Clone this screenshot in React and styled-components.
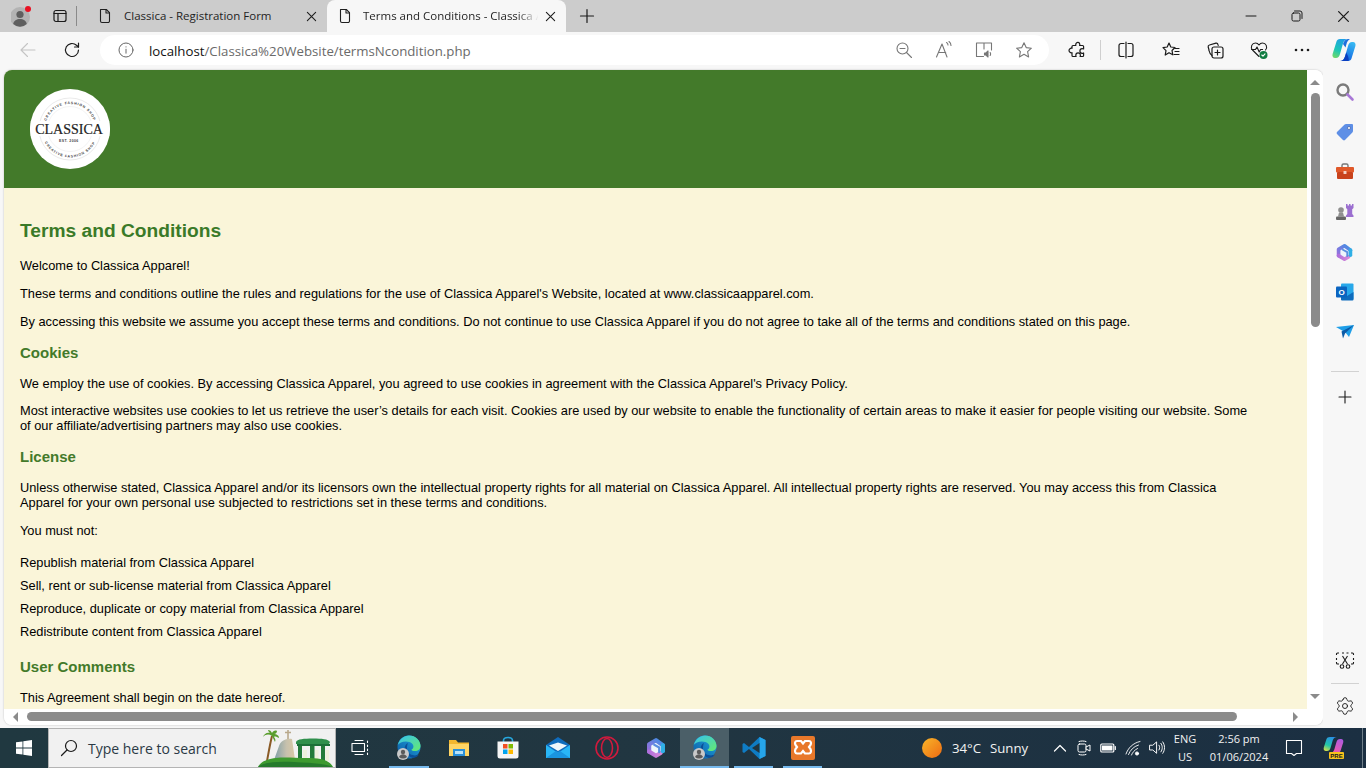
import React from "react";
import styled, { createGlobalStyle } from "styled-components";
import { Settings } from "lucide-react";

const Global = createGlobalStyle`
  html, body { margin: 0; padding: 0; width: 1366px; height: 768px; overflow: hidden; }
  * { box-sizing: border-box; }
`;

const Screen = styled.div`
  width: 1366px; height: 768px; display: flex; flex-direction: column;
  background: #f7f7f7; overflow: hidden; font-family: "Open Sans", "Liberation Sans", sans-serif;
`;
const TabStrip = styled.div`
  height: 32px; flex: none; display: flex; align-items: stretch; background: #cccccc; padding-left: 4px;
`;
const Slot = styled.div`
  width: ${p => p.$w || 40}px; height: ${p => p.$h ? p.$h + "px" : "auto"}; flex: none; margin-left: ${p => p.$ml || 0}px;
  display: flex; align-items: center; justify-content: center; position: relative; color: ${p => p.$c || "#1b1b1b"};
`;
const StripDivider = styled.div`
  width: 1px; height: 20px; background: #8a8a8a; align-self: center; flex: none; margin-right: 11px;
`;
const Tab = styled.div`
  width: 239px; flex: none; display: flex; align-items: center; padding-left: ${p => p.$active ? 10 : 9}px;
  background: ${p => p.$active ? "#f7f7f7" : "transparent"}; border-radius: 8px 8px 0 0; color: #1f1f1f;
`;
const TabIcon = styled.div`width: 16px; height: 16px; flex: none; margin-right: ${p => p.$gap}px; display:flex;`;
const TabTitle = styled.span`
  flex: none; width: 179px; font-size: 11.5px; line-height: 16px; white-space: nowrap; overflow: hidden;
  ${p => p.$fade ? "-webkit-mask-image: linear-gradient(90deg,#000 86%,transparent 98%); mask-image: linear-gradient(90deg,#000 86%,transparent 98%);" : ""}
`;
const TabClose = styled.div`width: 16px; height: 16px; flex: none; display:flex; align-items:center; justify-content:center;`;
const Spacer = styled.div`flex: 1;`;

const Toolbar = styled.div`
  height: 36px; flex: none; display: flex; align-items: center; padding-left: 8px; background: #f7f7f7;
`;
const AddressBar = styled.div`
  width: 949px; height: 30px; flex: none; margin-left: 8px; margin-right: 8px; background: #fff; border-radius: 15px;
  display: flex; align-items: center; padding-left: 16px; padding-right: 5px;
`;
const Url = styled.div`
  margin-left: 13px; padding-top: 2px; flex: 1; font-size: 13.25px; color: #6a6a6a; white-space: nowrap;
  b { font-weight: 400; color: #111; }
`;
const ToolDivider = styled.div`width: 1px; height: 20px; background: #cfcfcf; flex: none; margin: 0 3px;`;

const Middle = styled.div`flex: 1; display: flex; min-height: 0;`;
const Browser = styled.div`
  width: 1319px; margin: 2px 0 3px 4px; flex: none; background: #fff; border-radius: 8px;
  display: grid; grid-template-columns: 1303px 16px; grid-template-rows: 639px 16px; overflow: hidden;
  box-shadow: 0 0 2px rgba(0,0,0,.25);
`;
const Page = styled.div`overflow: hidden; background: #faf5d9; font-family: "Liberation Sans", Arial, sans-serif; color: #000;`;
const Banner = styled.header`
  height: 118px; background: #437a2a; padding: 19px 26px;
`;
const LogoCircle = styled.div`width: 80px; height: 80px; border-radius: 50%; background: #fff; overflow: hidden;`;
const Article = styled.main`
  width: 1251px; padding: 16.1px 0 0 16px; font-size: 12.8px; line-height: 15px;
`;
const Title = styled.h1`
  margin: 16px 0; font-size: 19.2px; line-height: 22px; font-weight: 700; color: #3a7a28;
`;
const Heading = styled.h2`
  margin: 15px 0; font-size: 15px; line-height: 17px; font-weight: 700; color: #437a2a;
`;
const Para = styled.p`margin: 12.8px 0;`;
const TermsList = styled.ul`
  list-style: none; margin: 12.8px 0; padding: 0;
`;
const TermsItem = styled.li`padding: 4px 0; line-height: 15px;`;

const VBar = styled.div`
  display: flex; flex-direction: column; align-items: center; background: #fff; padding-top: 10px;
`;
const VThumb = styled.div`width: 9px; height: 234px; border-radius: 5px; background: #8b8b8b; margin-top: 8px;`;
const VTri = styled.div`
  width: 0; height: 0; border-left: 5px solid transparent; border-right: 5px solid transparent;
  ${p => p.$down ? "border-top: 5px solid #8b8b8b; margin-top: auto; margin-bottom: 10px;" : "border-bottom: 5px solid #8b8b8b;"}
`;
const HBar = styled.div`
  display: flex; align-items: center; background: #fff; padding: 0 0 1px 9px; grid-column: 1;
`;
const HThumb = styled.div`width: 1210px; height: 9px; border-radius: 5px; background: #8b8b8b; margin-left: 9px;`;
const HTri = styled.div`
  width: 0; height: 0; border-top: 5px solid transparent; border-bottom: 5px solid transparent;
  ${p => p.$right ? "border-left: 5px solid #8b8b8b; margin-left: 56px;" : "border-right: 5px solid #8b8b8b;"}
`;
const Corner = styled.div`background: #fff;`;

const Sidebar = styled.aside`
  width: 43px; flex: none; display: flex; flex-direction: column; align-items: center; padding: 4px 0 2px 0; background: #f7f7f7;
`;
const SideDivider = styled.div`width: 28px; height: 1px; background: #d2d2d2; flex: none; margin-top: ${p => p.$mt}px; margin-bottom: ${p => p.$mb}px;`;

const Taskbar = styled.footer`
  height: 40px; flex: none; display: flex; align-items: stretch; color: #fff;
  background: linear-gradient(90deg, #203840 0%, #213641 45%, #1b2f42 100%);
`;
const StartBtn = styled.div`width: 48px; flex: none; display: flex; align-items: center; justify-content: center;`;
const SearchBox = styled.div`
  width: 288px; flex: none; background: #f1f1f1; border: 1px solid #b4b4b4; display: flex; align-items: center; padding-left: 11px; overflow: hidden;
`;
const SearchText = styled.span`margin-left: 10px; font-size: 14px; white-space: nowrap; flex: 1; color: #2b3a45;`;
const SceneSvg = styled.svg`flex: none; align-self: flex-end;`;
const TaskBtn = styled.div`
  width: ${p => p.$w || 49}px; flex: none; display: flex; align-items: center; justify-content: center; position: relative;
  background: ${p => p.$active ? "#4b5f68" : "transparent"};
  &::after { content: ""; display: ${p => p.$line ? "block" : "none"}; position: absolute; left: ${p => p.$active ? 0 : 5}px; right: ${p => p.$active ? 0 : 5}px; bottom: 0; height: 2px; background: #76b9ed; }
`;
const Weather = styled.div`
  margin-left: 95px; display: flex; align-items: center; flex: none; font-size: 13.2px; width: 125px; color: #f2f2f2;
`;
const Temp = styled.span`margin-left: 10px; margin-right: 9px;`;
const Tray = styled.div`width: ${p => p.$w}px; margin-left: ${p => p.$ml || 0}px; flex: none; display: flex; align-items: center; justify-content: center;`;
const ClockCol = styled.div`
  width: ${p => p.$w}px; flex: none; display: flex; flex-direction: column; align-items: center; justify-content: center;
  font-size: 11px; line-height: 18px; color: #f2f2f2; margin-left: ${p => p.$ml || 0}px;
`;
const EndLine = styled.div`width: 1px; margin-left: 13px; background: #6f7e88; flex: none;`;

const Ico = ({ s = 16, v = 16, children, sw = 1.1, c = "currentColor" }) => (
  <svg width={s} height={s} viewBox={`0 0 ${v} ${v}`} fill="none" stroke={c} strokeWidth={sw} strokeLinecap="round" strokeLinejoin="round">{children}</svg>
);
const DocIcon = () => <Ico><path d="M3.5 1.5h5.8l3.2 3.2v8.3a1.5 1.5 0 0 1-1.5 1.5H5a1.5 1.5 0 0 1-1.5-1.5z" /><path d="M9 1.7v3.3h3.3" /></Ico>;
const XIcon = ({ s = 11 }) => <Ico s={s} v={12} sw={1.2}><path d="M1.5 1.5l9 9M10.500 1.500l-9 9" /></Ico>;

const Logo = () => (
  <svg width="80" height="80" viewBox="0 0 80 80">
    <defs>
      <path id="arcTop" d="M15 40a25 25 0 0 1 50 0" />
      <path id="arcBot" d="M11.500 40a28.500 28.500 0 0 0 57 0" />
    </defs>
    <circle cx="40" cy="40" r="31" fill="none" stroke="#dcdcdc" strokeWidth=".6" />
    <circle cx="40" cy="40" r="22.500" fill="none" stroke="#e6e6e6" strokeWidth=".5" />
    <rect x="0" y="32" width="80" height="15" fill="#fff" />
    <text fontSize="3.500" fontWeight="700" fill="#444" fontFamily="Liberation Sans" letterSpacing=".8"><textPath href="#arcTop" startOffset="50%" textAnchor="middle">CREATIVE FASHION SHOP</textPath></text>
    <text fontSize="3.500" fontWeight="700" fill="#444" fontFamily="Liberation Sans" letterSpacing=".8"><textPath href="#arcBot" startOffset="50%" textAnchor="middle">CREATIVE FASHION SHOP</textPath></text>
    <text x="39" y="44.500" fontSize="14" textAnchor="middle" fontFamily="Liberation Serif" fill="#222" stroke="#222" strokeWidth=".2">CLASSICA</text>
    <text x="38.800" y="53" fontSize="3.500" textAnchor="middle" fontFamily="Liberation Sans" fontWeight="700" fill="#444" letterSpacing=".4">EST. 2006</text>
  </svg>
);

const Copilot = ({ s = 24 }) => (
  <svg width={s} height={s} viewBox="0 0 24 24">
    <defs>
      <linearGradient id="cpL" x1=".6" y1="0" x2=".2" y2="1"><stop offset="0" stopColor="#1f9fe6" /><stop offset=".6" stopColor="#1cc7b5" /><stop offset="1" stopColor="#6fd86a" /></linearGradient>
      <linearGradient id="cpR" x1=".7" y1="0" x2=".3" y2="1"><stop offset="0" stopColor="#38b8f2" /><stop offset="1" stopColor="#0e5fe0" /></linearGradient>
    </defs>
    <path d="M16 23H8c2.500 0 4-1.500 5-4.500L16 8c.7-2.500 2-4 4-4h1c2 0 3 2 2.400 4L19.500 20.500C19 22 18 23 16 23z" fill="url(#cpR)" />
    <path d="M8 1h8c-2.500 0-4 1.500-5 4.500L8 16c-.7 2.500-2 4-4 4H3c-2 0-3-2-2.400-4L4.500 3.500C5 2 6 1 8 1z" fill="url(#cpL)" />
    <path d="M11 6c.8-2.500 2.500-5 5-5h2c-2 1-3 3-3.500 5l-1 3.500z" fill="#1d70dd" />
    <path d="M8 23c2.500 0 4-1.500 5-4.500l1.200-4L16 18c.5 2 1 4 .5 5z" fill="#0b3fc0" />
  </svg>
);
const CopilotPre = () => (
  <svg width="22" height="24" viewBox="0 0 22 24">
    <defs>
      <linearGradient id="cpxL" x1=".6" y1="0" x2=".2" y2="1"><stop offset="0" stopColor="#2a8fe6" /><stop offset=".6" stopColor="#22c7a8" /><stop offset="1" stopColor="#d6e04a" /></linearGradient>
      <linearGradient id="cpxR" x1=".7" y1="0" x2=".3" y2="1"><stop offset="0" stopColor="#b05adf" /><stop offset="1" stopColor="#f05aa8" /></linearGradient>
    </defs>
    <path d="M14 17H7c2 0 3.500-1 4.300-3.500L13.500 6c.5-2 1.700-3 3.500-3h1c1.800 0 2.800 1.500 2.200 3.500L17.500 15c-.5 1.300-1.500 2-3.500 2z" fill="url(#cpxR)" />
    <path d="M7 1h7c-2 0-3.500 1-4.300 3.500L7.500 12c-.5 2-1.700 3-3.500 3H3c-1.800 0-2.800-1.500-2.200-3.500L3.500 3C4 1.700 5 1 7 1z" fill="url(#cpxL)" />
    <rect x="6" y="16" width="15" height="7" rx="1" fill="#f8c21c" />
    <text x="13.500" y="21.800" fontSize="6" fontWeight="700" fontFamily="Liberation Sans" textAnchor="middle" fill="#1a1a1a">PRE</text>
  </svg>
);
const Health = () => (
  <svg width="20" height="20" viewBox="0 0 20 20" fill="none" stroke="#1b1b1b" strokeWidth="1.1" strokeLinejoin="round" strokeLinecap="round">
    <path d="M10 16.500L3.500 10C1 7 3 3 6.500 3 8 3 9.200 3.800 10 5c.8-1.200 2-2 3.500-2C17 3 19 7 16.500 10" />
    <path d="M2.500 9.500h4l1.500-2.500 2.200 5 1.400-2.500h2" />
    <circle cx="14.500" cy="15" r="4" fill="#107c41" stroke="none" />
    <path d="M12.800 15l1.200 1.200 2-2.300" stroke="#fff" />
  </svg>
);
const M365 = ({ s = 20, id }) => (
  <svg width={s} height={s} viewBox="0 0 24 24" fill="none" strokeWidth="4.600" strokeLinecap="round" strokeLinejoin="round">
    <defs>
      <linearGradient id={id + "a"} x1="0" y1="1" x2="1" y2="0"><stop offset="0" stopColor="#9a6fdc" /><stop offset="1" stopColor="#3f8fe4" /></linearGradient>
      <linearGradient id={id + "b"} x1="0" y1="0" x2="1" y2="0"><stop offset="0" stopColor="#b06fdc" /><stop offset="1" stopColor="#d889d8" /></linearGradient>
    </defs>
    <path d="M12 5l7 4v6l-7 4-7-4V9z" fill="#eef5fb" stroke="none" />
    <path d="M19.500 9L12 3.500 4.500 8v8" stroke={`url(#${id}a)`} />
    <path d="M4.500 16L12 20.500l5-3" stroke={`url(#${id}b)`} />
    <path d="M19.500 9v6.500" stroke="#2fb0e6" />
    <path d="M10 8.500l5.500 3v5" stroke="#5a8fe0" strokeWidth="2.400" />
  </svg>
);
const Edge = ({ id }) => (
  <svg width="26" height="26" viewBox="0 0 26 26">
    <defs>
      <linearGradient id={id + "a"} x1="0" y1="1" x2="1" y2="0"><stop offset="0" stopColor="#0c59a4" /><stop offset="1" stopColor="#1fa8e0" /></linearGradient>
      <linearGradient id={id + "b"} x1="0" y1="0" x2="1" y2="1"><stop offset="0" stopColor="#35c1f1" /><stop offset="1" stopColor="#66eb6e" /></linearGradient>
    </defs>
    <circle cx="13" cy="12" r="11.500" fill={`url(#${id}a)`} />
    <path d="M1.800 10C3.500 4 8 .5 13 .5c6.500 0 11.500 5 11.500 10.500 0 3-2.500 5-5.500 5-2 0-3.500-.5-3.500-1.500 3-1 2.800-6-2-7.500-5-1.500-10 .5-12 3z" fill={`url(#${id}b)`} />
    <path d="M12 8c-2.500 1-4 4-3 8 1 3 4 6 8 7 2.500-.3 5-1.500 6-3.500-2 1-6 1.500-9-.5-3-2-4-6-2-11z" fill="#0b4f98" />
    <circle cx="7" cy="19" r="6" fill="#c9c9c9" /><circle cx="7" cy="17" r="2.200" fill="#5b5b5b" /><path d="M3 22c.8-2 2.300-2.800 4-2.800s3.200.8 4 2.800a6 6 0 0 1-8 0z" fill="#5b5b5b" />
  </svg>
);
const Scenery = () => (
  <SceneSvg width="85" height="38" viewBox="0 2 85 38">
    <defs>
      <linearGradient id="mnt" x1="0" y1="0" x2="1" y2="0"><stop offset="0" stopColor="#7f9fa8" /><stop offset=".6" stopColor="#c7c1ad" /><stop offset="1" stopColor="#d8c8a4" /></linearGradient>
    </defs>
    <path d="M38 12V3M35 5.500h6" stroke="#b9a98c" strokeWidth="1.600" fill="none" />
    <path d="M24 33l5-14c1.500-5 7-8 13-7l3 21z" fill="url(#mnt)" />
    <path d="M17 34c1.500-8 3-17 5-25" stroke="#8a5a26" strokeWidth="2" fill="none" />
    <path d="M22 9c-3-2-6-2-9 1 1-3 4-5 7-4-1-1-2-2-2-3 2 0 3 1 4 3 1-2 3-3 5-2 0 1-1 3-3 3 2 0 5 1 5 4-2-1-4-2-5-1 1 1 2 3 1 5-1-2-2-4-3-6z" fill="#5a9e2e" />
    <path d="M46 15c1-3 8-3.500 17-3.500s15 .5 17 3.500l-1 2H46z" fill="#2f8f4c" />
    <path d="M47 17h33v2H47z" fill="#1b6f38" />
    <path d="M48 19h4v15h-4zM60 19h4.500v15H60zM71 19h4v15h-4z" fill="#237a3a" />
    <path d="M53 23h4v11h-4zM65 23h3.500v11H65zM75.500 23H79v11h-3.500z" fill="#eef0dc" />
    <path d="M8 40c3-6 10-8 18-9 8-1 20 0 28 0s24-1 29 9z" fill="#3e9a30" />
    <path d="M8 40c6-5 20-6 36-5s30 1 39 5z" fill="#257a2c" />
  </SceneSvg>
);

export default function App() {
  return (
    <Screen>
      <Global />
      <TabStrip>
        <Slot $w={36}>
          <svg width="22" height="24" viewBox="0 0 22 24">
            <circle cx="9" cy="13" r="10" fill="#b3b3b3" />
            <circle cx="9" cy="10.500" r="3.600" fill="#5f5f5f" />
            <path d="M2.200 20c.6-3.500 3.400-5 6.800-5s6.200 1.500 6.800 5a10 10 0 0 1-13.600 0z" fill="#5f5f5f" />
            <circle cx="17" cy="5" r="3" fill="#e81123" />
          </svg>
        </Slot>
        <Slot $w={32} $ml={4}>
          <Ico s={14} v={14} sw={1.200} c="#1b1b1b"><rect x="1" y="1.500" width="12" height="11" rx="2" /><path d="M1 4.500h12M5 4.500v8" /></Ico>
        </Slot>
        <StripDivider />
        <Tab>
          <TabIcon $gap={11}><DocIcon /></TabIcon>
          <TabTitle>Classica - Registration Form</TabTitle>
          <TabClose><XIcon /></TabClose>
        </Tab>
        <Tab $active>
          <TabIcon $gap={10}><DocIcon /></TabIcon>
          <TabTitle $fade>Terms and Conditions - Classica Apparel</TabTitle>
          <TabClose><XIcon /></TabClose>
        </Tab>
        <Slot $w={34} $ml={4}><Ico s={16} v={16} sw={1.200}><path d="M8 1.500v13M1.500 8h13" /></Ico></Slot>
        <Spacer />
        <Slot $w={46}><Ico s={12} v={12} sw={1}><path d="M1 6h10" /></Ico></Slot>
        <Slot $w={46}><Ico s={12} v={12} sw={1}><rect x="1" y="3" width="8" height="8" rx="1.500" /><path d="M3.500 1h5.500A2 2 0 0 1 11 3v5.500" /></Ico></Slot>
        <Slot $w={46}><XIcon s={13} /></Slot>
      </TabStrip>

      <Toolbar>
        <Slot $w={40} $c="#c4c4c4"><Ico s={18} v={18} sw={1.100}><path d="M16 9H2M8.500 2.500L2 9l6.500 6.500" /></Ico></Slot>
        <Slot $w={40} $ml={4}><Ico s={18} v={18} sw={1.200}><path d="M15.500 9a6.500 6.500 0 1 1-2-4.700L15.500 6" /><path d="M15.500 2v4h-4" /></Ico></Slot>
        <AddressBar>
          <Slot $w={20} $c="#666"><Ico s={16} v={16} sw={1}><circle cx="8" cy="8" r="7" /><path d="M8 7.200v4M8 4.800v.2" /></Ico></Slot>
          <Url><b>localhost</b>/Classica%20Website/termsNcondition.php</Url>
          <Slot $w={40} $c="#777"><Ico s={18} v={18} sw={1.100}><circle cx="7.500" cy="7.500" r="5.500" /><path d="M5 7.500h5M11.500 11.500l5 5" /></Ico></Slot>
          <Slot $w={40} $c="#777">
            <Ico s={18} v={18} sw={1.100}><path d="M1.500 16L7 3l5 13M3.300 11.500h7.400M11.500 1.500c1 .5 1.500 1.500 1.500 2.500M14 .5c1.300 1 2 2.500 2 4" /></Ico>
          </Slot>
          <Slot $w={40} $c="#777">
            <Ico s={18} v={18} sw={1.100}><path d="M8.500 15.500H1.500V2h15v7M9 2v6" /><path d="M9.500 12h1.500l2-2v6l-2-2H9.500zM15.200 11.500c.5.800.5 2.200 0 3" fill="currentColor" /></Ico>
          </Slot>
          <Slot $w={40} $c="#777"><Ico s={18} v={18} sw={1.100}><path d="M9 1.800l2.200 4.800 5.200.6-3.800 3.500 1 5.200L9 13.300l-4.600 2.600 1-5.200L1.600 7.200l5.200-.6z" /></Ico></Slot>
        </AddressBar>
        <Slot $w={40}><Ico s={18} v={18} sw={1.200}><path d="M8 2.500a2 2 0 0 1 3.800.7c0 .5 0 .8-.2 1.300h3a1 1 0 0 1 1 1v2.500c-.4-.2-.9-.3-1.400-.3a2.300 2.300 0 0 0 0 4.600c.5 0 1-.1 1.400-.3v2.500a1 1 0 0 1-1 1h-2.500c.2-.4.300-.9.300-1.300a2.300 2.300 0 0 0-4.600 0c0 .4.100.9.300 1.300H5a1 1 0 0 1-1-1v-2.800a2.300 2.300 0 1 1 0-4.400V5.500a1 1 0 0 1 1-1h2.800c-.2-.5 0-1.400.2-2z" /></Ico></Slot>
        <ToolDivider />
        <Slot $w={44}><Ico s={18} v={18} sw={1.200}><path d="M7 2.500H4a2 2 0 0 0-2 2v9a2 2 0 0 0 2 2h3M11 2.500h3a2 2 0 0 1 2 2v9a2 2 0 0 1-2 2h-3M9 1v16" /></Ico></Slot>
        <Slot $w={45}><Ico s={18} v={18} sw={1.200}><path d="M7 2l1.800 4 4.200.5-3 3 .8 4.300L7 11.700 3.200 14l.8-4.300-3-3L5.200 6z" /><path d="M13 7.500h4M13 10.500h4M12 13.500h5" /></Ico></Slot>
        <Slot $w={44}><Ico s={18} v={18} sw={1.200}><path d="M3 9l-.8-3c-.2-1 .3-1.800 1.200-2l6.500-1.800c1-.2 1.800.3 2 1.200l.3 1" /><rect x="6" y="6" width="11" height="11" rx="2" /><path d="M11.500 9v5M9 11.500h5M3 9.500c.4 2 1 3.500 3 5" /></Ico></Slot>
        <Slot $w={44}><Health /></Slot>
        <Slot $w={42}><svg width="16" height="4" viewBox="0 0 16 4"><circle cx="2" cy="2" r="1.300" fill="#1b1b1b" /><circle cx="8" cy="2" r="1.300" fill="#1b1b1b" /><circle cx="14" cy="2" r="1.300" fill="#1b1b1b" /></svg></Slot>
        <Slot $w={42}><Copilot /></Slot>
      </Toolbar>

      <Middle>
        <Browser>
          <Page>
            <Banner><LogoCircle><Logo /></LogoCircle></Banner>
            <Article>
              <Title>Terms and Conditions</Title>
              <Para>Welcome to Classica Apparel!</Para>
              <Para>These terms and conditions outline the rules and regulations for the use of Classica Apparel's Website, located at www.classicaapparel.com.</Para>
              <Para>By accessing this website we assume you accept these terms and conditions. Do not continue to use Classica Apparel if you do not agree to take all of the terms and conditions stated on this page.</Para>
              <Heading>Cookies</Heading>
              <Para>We employ the use of cookies. By accessing Classica Apparel, you agreed to use cookies in agreement with the Classica Apparel's Privacy Policy.</Para>
              <Para>Most interactive websites use cookies to let us retrieve the user’s details for each visit. Cookies are used by our website to enable the functionality of certain areas to make it easier for people visiting our website. Some of our affiliate/advertising partners may also use cookies.</Para>
              <Heading>License</Heading>
              <Para>Unless otherwise stated, Classica Apparel and/or its licensors own the intellectual property rights for all material on Classica Apparel. All intellectual property rights are reserved. You may access this from Classica Apparel for your own personal use subjected to restrictions set in these terms and conditions.</Para>
              <Para>You must not:</Para>
              <TermsList>
                <TermsItem>Republish material from Classica Apparel</TermsItem>
                <TermsItem>Sell, rent or sub-license material from Classica Apparel</TermsItem>
                <TermsItem>Reproduce, duplicate or copy material from Classica Apparel</TermsItem>
                <TermsItem>Redistribute content from Classica Apparel</TermsItem>
              </TermsList>
              <Heading>User Comments</Heading>
              <Para>This Agreement shall begin on the date hereof.</Para>
            </Article>
          </Page>
          <VBar><VTri /><VThumb /><VTri $down /></VBar>
          <HBar><HTri /><HThumb /><HTri $right /></HBar>
          <Corner />
        </Browser>
        <Sidebar>
          <Slot $h={40}><svg width="20" height="20" viewBox="0 0 20 20" fill="none"><circle cx="8" cy="8" r="5.500" stroke="#7b7b7b" strokeWidth="2.400" /><path d="M12.500 12.500l5 5" stroke="#a877d6" strokeWidth="2.600" strokeLinecap="round" /></svg></Slot>
          <Slot $h={40}><svg width="20" height="20" viewBox="0 0 20 20"><path d="M11 2h6a1 1 0 0 1 1 1v6a2 2 0 0 1-.6 1.400L10 18a1.500 1.500 0 0 1-2 0l-6-6a1.500 1.500 0 0 1 0-2l7.600-7.400A2 2 0 0 1 11 2z" fill="#5e8fe6" /><circle cx="14" cy="6" r="1.500" fill="#fff" stroke="#2e4f9a" strokeWidth=".6" /></svg></Slot>
          <Slot $h={40}><svg width="20" height="20" viewBox="0 0 20 20"><path d="M7 5V3.500A1.500 1.500 0 0 1 8.500 2h3A1.500 1.500 0 0 1 13 3.500V5" fill="none" stroke="#777" strokeWidth="1.400" /><rect x="1" y="5" width="18" height="5.500" rx="1" fill="#e0592a" /><rect x="2" y="10" width="16" height="7" rx="1" fill="#c9431c" /><rect x="8.500" y="9" width="3" height="3" rx=".6" fill="#f3d3c6" /></svg></Slot>
          <Slot $h={40}><svg width="20" height="20" viewBox="0 0 20 20"><path d="M11 2h1.500v1.500H14V2h1.500v1.500H17V2h1.500v4l-1.300 1.200V12l1.300 1.500V15H11v-1.500l1.300-1.500V7.200L11 6z" fill="#9b6fd0" /><circle cx="6" cy="8" r="2.800" fill="#8f8f8f" /><path d="M4 10.500h4l1 4H3z" fill="#8f8f8f" /><rect x="1" y="14.500" width="10" height="3.500" rx="1" fill="#666" /></svg></Slot>
          <Slot $h={40}><M365 s={19} id="ms" /></Slot>
          <Slot $h={40}><svg width="20" height="20" viewBox="0 0 20 20"><rect x="6" y="1.500" width="12.500" height="16" rx="1" fill="#28a8ea" /><path d="M6 10l6 4 6.500-4v7.500a1 1 0 0 1-1 1H7a1 1 0 0 1-1-1z" fill="#0f6cbd" /><rect x="1" y="4.500" width="11" height="11" rx="1" fill="#0a64c0" /><text x="6.500" y="13" fontSize="8" fontWeight="700" fontFamily="Liberation Sans" textAnchor="middle" fill="#fff">O</text></svg></Slot>
          <Slot $h={40}><svg width="20" height="20" viewBox="0 0 20 20"><path d="M1 5l18-2-5 12-3.500-4.500z" fill="#1e9ee8" /><path d="M6.500 9.500L19 3 10 11.500l-2 5z" fill="#0c5aa6" /></svg></Slot>
          <SideDivider $mt={19} $mb={5} />
          <Slot $h={40}><Ico s={16} v={16} sw={1.100} c="#1b1b1b"><path d="M8 2v12M2 8h12" /></Ico></Slot>
          <Spacer />
          <Slot $h={40}><svg width="20" height="20" viewBox="0 0 20 20" fill="none" stroke="#1b1b1b" strokeWidth="1.100"><path d="M1.500 4V3a1 1 0 0 1 1-1H4M7 2h2M11.500 2h2M16 2h1.500a1 1 0 0 1 1 1v1M18.500 7v2M18.500 11v1a1 1 0 0 1-1 1H16M4 13H2.500a1 1 0 0 1-1-1v-1M1.500 7v2" /><path d="M7.500 5l5 8M12.500 5l-5 8" /><circle cx="7" cy="15.500" r="1.800" /><circle cx="13" cy="15.500" r="1.800" /></svg></Slot>
          <SideDivider $mt={2} $mb={2} />
          <Slot $h={40}><Settings size={20} strokeWidth={1.1} color="#1b1b1b" /></Slot>
        </Sidebar>
      </Middle>

      <Taskbar>
        <StartBtn><svg width="16" height="16" viewBox="0 0 16 16" fill="#fff"><path d="M0 2.300l6.500-.9v6.200H0zM7.300 1.300L16 0v7.600H7.300zM0 8.400h6.500v6.200L0 13.700zM7.300 8.400H16V16l-8.700-1.300z" /></svg></StartBtn>
        <SearchBox>
          <Ico s={18} v={18} sw={1.200} c="#1a1a1a"><circle cx="11" cy="7" r="5.500" /><path d="M7 11l-5.500 5.500" /></Ico>
          <SearchText>Type here to search</SearchText>
          <Scenery />
        </SearchBox>
        <TaskBtn $w={48}><Ico s={18} v={18} sw={1.100} c="#fff"><path d="M4 1.500h8M1 4.500h12.500v8H1zM4 15.500h8M16.500 2v1.500M16.500 6v1.500M16.500 10v1.500M16.500 14v1.500" /></Ico></TaskBtn>
        <TaskBtn $w={50} $line><Edge id="e1" /></TaskBtn>
        <TaskBtn $w={49}><svg width="22" height="20" viewBox="0 0 22 20"><path d="M1 2h7l2 2.500h11V18H1z" fill="#f3b72f" /><rect x="1" y="6" width="20" height="12" fill="#ffd565" /><rect x="5" y="11" width="12" height="7" fill="#2a8fd8" /><rect x="7" y="13" width="8" height="3" fill="#b9e2f6" /></svg></TaskBtn>
        <TaskBtn $w={50}><svg width="24" height="24" viewBox="0 0 24 24"><path d="M7.500 7V4.500C7.500 2.500 9 1.500 12 1.500s4.500 1 4.500 3V7" fill="none" stroke="#27a8df" strokeWidth="1.600" /><path d="M1.500 5.500h21V20a2.500 2.500 0 0 1-2.500 2.500H4A2.500 2.500 0 0 1 1.500 20z" fill="#f5f5f5" /><rect x="7" y="8" width="4.500" height="4.500" fill="#f25022" /><rect x="12.500" y="8" width="4.500" height="4.500" fill="#7fba00" /><rect x="7" y="13.500" width="4.500" height="4.500" fill="#00a4ef" /><rect x="12.500" y="13.500" width="4.500" height="4.500" fill="#ffb900" /></svg></TaskBtn>
        <TaskBtn $w={49}><svg width="24" height="24" viewBox="0 0 24 24"><path d="M12 1l12 8v13H0V9z" fill="#0f6cbd" /><path d="M0 9v13h24V9l-12 8z" fill="#29b6f6" /><path d="M3 9.500l9-3 9 3-9 5.500z" fill="#eef6fb" /><path d="M0 22l10-7 2 1 2-1 10 7z" fill="#1a95e0" /></svg></TaskBtn>
        <TaskBtn $w={49}><svg width="24" height="24" viewBox="0 0 24 24" fill="none" stroke="#d01a3d" strokeWidth="1.600"><circle cx="12" cy="12" r="11" /><ellipse cx="12" cy="12" rx="5.500" ry="9.500" /></svg></TaskBtn>
        <TaskBtn $w={49}><M365 s={22} id="mt" /></TaskBtn>
        <TaskBtn $w={49} $active $line><Edge id="e2" /></TaskBtn>
        <TaskBtn $w={49} $line><svg width="24" height="24" viewBox="0 0 24 24"><path d="M17.500 1L23.500 4v16l-6 3L7 13l-5 4-1.500-1V8L2 7l5 4z" fill="#0f7cc4" /><path d="M17.500 1L23.500 4v16l-6 3z" fill="#26a5ea" /><path d="M17.500 7L10 12l7.500 5z" fill="#213640" /></svg></TaskBtn>
        <TaskBtn $w={49} $line><svg width="24" height="24" viewBox="0 0 24 24"><rect width="24" height="24" rx="2" fill="#e8782a" /><path d="M6 5h4l2 2.500L14 5h4c2 0 2.500 2 1.500 4L18 11l1.500 2c1 2 .5 4.500-1.500 4.500h-4L12 15l-2 2.500H6c-2 0-2.500-2.500-1.500-4.500L6 11 4.500 9C3.500 7 4 5 6 5z" fill="none" stroke="#fff" strokeWidth="2.200" /></svg></TaskBtn>
        <Weather>
          <svg width="20" height="20" viewBox="0 0 20 20"><defs><linearGradient id="sun" x1="0" y1="0" x2="1" y2="1"><stop offset="0" stopColor="#f8b62a" /><stop offset="1" stopColor="#ee6a12" /></linearGradient></defs><circle cx="10" cy="10" r="10" fill="url(#sun)" /></svg>
          <Temp>34°C</Temp>Sunny
        </Weather>
        <Tray $w={24} $ml={1}><Ico s={14} v={14} sw={1.200} c="#fff"><path d="M1.500 10L7 4.500l5.500 5.500" /></Ico></Tray>
        <Tray $w={24}><Ico s={16} v={16} sw={1} c="#fff"><rect x="2" y="4" width="8" height="8" rx="1.500" /><path d="M10 7l4-2v6l-4-2M3 1.500c2-.7 5-.7 7 0M3 14.500c2 .7 5 .7 7 0" /></Ico></Tray>
        <Tray $w={24}><Ico s={16} v={16} sw={1.200} c="#fff"><rect x=".8" y="4" width="13" height="8" rx="1" /><rect x="2" y="5.500" width="10.500" height="5" fill="#fff" stroke="none" /><path d="M15.300 6.500v3" /></Ico></Tray>
        <Tray $w={25}><Ico s={16} v={16} sw={.9} c="#fff"><path d="M1 14C3 8 8 3 15 1.500M3.500 14.500c1.500-4 5-8 10-9.500M6.500 15c1-2.500 3-5 6-6.500" /><circle cx="12" cy="13.500" r="1.600" fill="#fff" /></Ico></Tray>
        <Tray $w={23}><Ico s={16} v={16} sw={1} c="#fff"><path d="M1 5.500h3l4-3.500v12L4 10.500H1zM10.500 5.500c1 1.500 1 3.500 0 5M12.500 3.500c2 2.500 2 6.500 0 9M14.500 2c2.500 3.500 2.500 8.500 0 12" transform="scale(.95)" /></Ico></Tray>
        <ClockCol $w={28} $ml={3}><span>ENG</span><span>US</span></ClockCol>
        <ClockCol $w={80}><span>2:56 pm</span><span>01/06/2024</span></ClockCol>
        <Tray $w={30}><Ico s={18} v={18} sw={1.100} c="#fff"><path d="M1.500 1.500h15v13h-5L9 16.500l-2.500-2h-5z" /></Ico></Tray>
        <Tray $w={30} $ml={10}><CopilotPre /></Tray>
        <EndLine />
      </Taskbar>
    </Screen>
  );
}
